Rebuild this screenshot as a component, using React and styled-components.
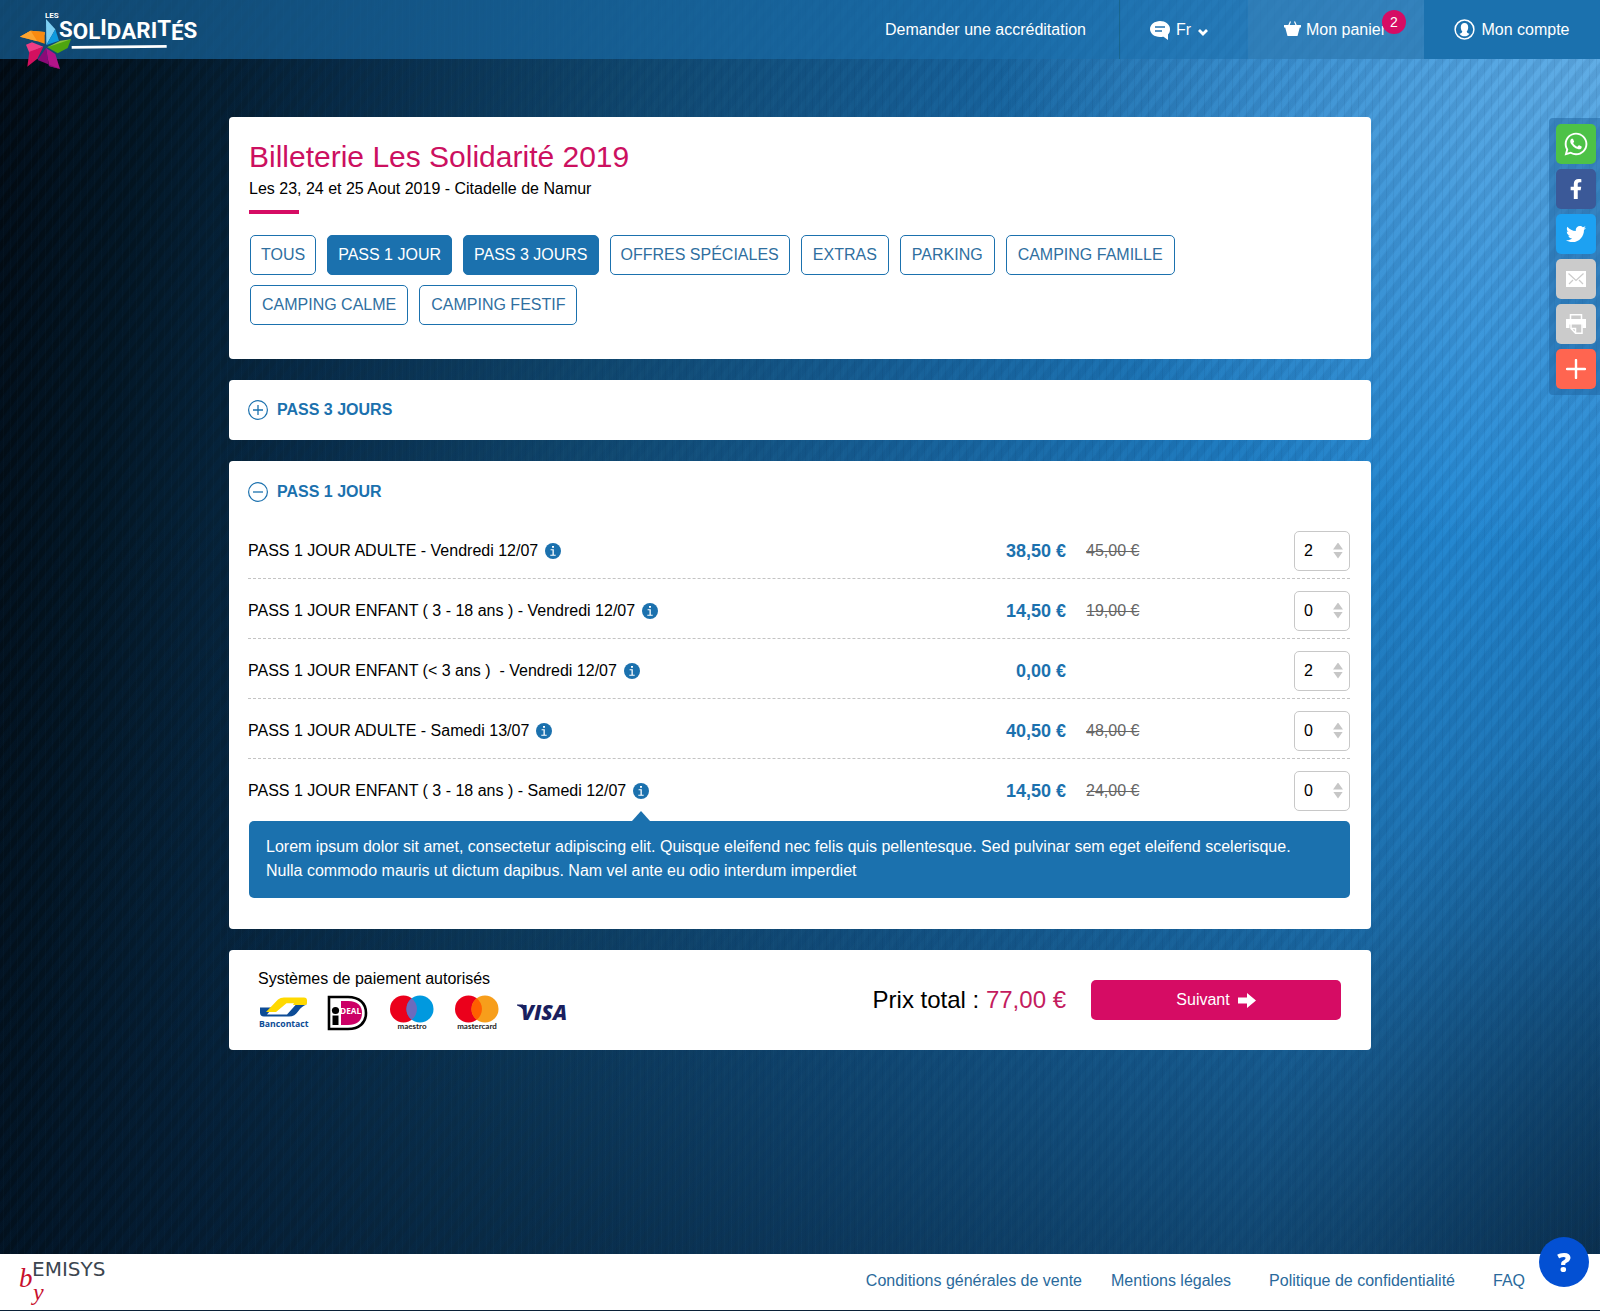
import React, { useState } from 'react';
import styled, { createGlobalStyle, css } from 'styled-components';
import { FaWhatsapp, FaFacebookF, FaTwitter } from 'react-icons/fa';

const blue = '#1b71ae';
const pink = '#d60c64';

const GlobalStyle = createGlobalStyle`
  *, *::before, *::after { box-sizing: border-box; }
  body { margin: 0; font: 16px/24px "Liberation Sans", Arial, sans-serif; color: #000; }
  a { text-decoration: none; }
  button, input, select { font: inherit; color: inherit; }
  h1, h2, p, ul { margin: 0; padding: 0; }
  ul { list-style: none; }
`;

const Page = styled.div`
  min-height: 100vh;
  display: flex;
  flex-direction: column;
  background:
    repeating-linear-gradient(128deg, rgba(0, 50, 100, 0.11) 0 5px, transparent 7px 11px, rgba(0, 50, 100, 0.11) 13px),
    repeating-linear-gradient(90deg, rgba(0, 20, 50, 0.06) 0 1px, transparent 1px 3px, rgba(80, 160, 220, 0.03) 3px 4px, transparent 4px 7px),
    radial-gradient(ellipse 600px 500px at 100% 4%, rgba(125, 190, 238, 0.7), rgba(110, 180, 235, 0.4) 50%, transparent),
    linear-gradient(180deg, transparent 38%, rgba(2, 14, 28, 0.22) 70%, rgba(2, 14, 28, 0.52) 96%),
    radial-gradient(ellipse 420px 600px at 104% 100%, rgba(2, 14, 28, 0.5), transparent),
    linear-gradient(97deg, #020910 0, #031420 9%, #082943 20%, #10466c 36%, #176097 54%, #1f7bbf 72%, #258ad4 86%, #2182ca 100%);
`;

const Header = styled.header`
  height: 59px;
  display: flex;
  justify-content: space-between;
  background: rgba(27, 112, 174, 0.6);
  color: #fff;
`;

const LogoLink = styled.a`
  height: 59px;
  svg { display: block; }
`;

const HeaderNav = styled.nav`
  display: flex;
`;

const navCell = css`
  display: flex;
  align-items: center;
  color: #fff;
`;

const NavLink = styled.a`
  ${navCell}
  padding-right: 33px;
  border-right: 1px solid rgba(20, 90, 110, 0.5);
`;

const Language = styled.label`
  ${navCell}
  width: 128px;
  padding-left: 30px;
  gap: 6px;
`;

const LanguageSelect = styled.select`
  appearance: none;
  border: 0;
  padding: 0;
  width: 16px;
  background: transparent;
  option { color: #000; }
`;

const NavTab = styled.a`
  ${navCell}
  position: relative;
  width: 176px;
  justify-content: center;
  gap: ${(p) => (p.$solid ? 6 : 5)}px;
  padding-right: ${(p) => (p.$solid ? 0 : 2)}px;
  background: ${(p) => (p.$solid ? blue : 'rgba(60, 130, 185, 0.45)')};
`;

const CartBadge = styled.span`
  position: absolute;
  top: 10px;
  right: 18px;
  width: 24px;
  height: 24px;
  border-radius: 50%;
  background: ${pink};
  font-size: 14px;
  text-align: center;
`;

const Main = styled.main`
  flex: 1;
  width: 100%;
  max-width: 1142px;
  margin: 0 auto;
  padding: 58px 0;
  display: flex;
  flex-direction: column;
  gap: 21px;
`;

const Card = styled.section`
  background: #fff;
  border-radius: 4px;
  padding: ${(p) => p.$pad || '0 20px'};
`;

const Title = styled.h1`
  font-size: 30px;
  line-height: 36px;
  font-weight: 400;
  color: #cc1060;
`;

const Subtitle = styled.p`
  margin-top: 2px;
  padding-bottom: 9px;
`;

const Accent = styled.div`
  width: 50px;
  height: 4px;
  background: ${pink};
`;

const Chips = styled.div`
  display: flex;
  flex-wrap: wrap;
  gap: 10px 11px;
  max-width: 1000px;
  margin-top: 21px;
  padding-left: 1px;
`;

const Chip = styled.button`
  height: 40px;
  padding: 0 ${(p) => (p.$wide ? 11 : 10)}px;
  border: 1px solid ${blue};
  border-radius: 5px;
  cursor: pointer;
  background: ${(p) => (p.$active ? blue : '#fff')};
  color: ${(p) => (p.$active ? '#fff' : '#2f6f9f')};
`;

const GroupTitle = styled.h2`
  font-size: 16px;
  line-height: 20px;
`;

const GroupToggle = styled.button`
  display: flex;
  align-items: center;
  gap: 9px;
  width: 100%;
  height: ${(p) => (p.$open ? 58 : 60)}px;
  padding: ${(p) => (p.$open ? '4px 0 0' : '0')};
  border: 0;
  background: none;
  font-weight: 700;
  color: ${blue};
  cursor: pointer;
`;

const Ticket = styled.li`
  display: grid;
  grid-template-columns: minmax(0, 1fr) 120px 228px 56px;
  align-items: center;
  height: 60px;
  padding-top: 4px;
  border-bottom: 1px ${(p) => (p.$last ? 'solid transparent' : 'dashed #c4c4c4')};
`;

const TicketName = styled.div`
  display: flex;
  align-items: center;
  gap: 7px;
  white-space: pre;
`;

const InfoWrap = styled.span`
  position: relative;
  display: flex;
`;

const InfoButton = styled.button`
  display: flex;
  padding: 0;
  border: 0;
  background: none;
  cursor: pointer;
`;

const Pointer = styled.span`
  position: absolute;
  left: -1px;
  top: 28px;
  border: 9px solid transparent;
  border-top: 0;
  border-bottom: 10px solid ${blue};
`;

const Price = styled.strong`
  font-size: 18px;
  text-align: right;
  color: ${blue};
`;

const OldPrice = styled.s`
  padding-left: 20px;
  color: #666;
`;

const Quantity = styled.div`
  display: flex;
  align-items: center;
  height: 40px;
  padding: 0 6px 0 9px;
  border: 1px solid #c8c8c8;
  border-radius: 5px;
`;

const QuantityInput = styled.input`
  flex: 1;
  min-width: 0;
  padding: 0;
  border: 0;
  outline: 0;
  background: none;
  appearance: textfield;
  &::-webkit-inner-spin-button { appearance: none; margin: 0; }
`;

const Steps = styled.div`
  display: flex;
  flex-direction: column;
  gap: 2px;
`;

const Step = styled.button`
  width: 10px;
  height: 7px;
  padding: 0;
  border: 0;
  background: #c6c6c6;
  clip-path: ${(p) => (p.$up ? 'polygon(50% 0, 100% 100%, 0 100%)' : 'polygon(0 0, 100% 0, 50% 100%)')};
  cursor: pointer;
`;

const Tip = styled.p`
  margin: 2px 0 0 1px;
  padding: 14px 16px 15px 17px;
  border-radius: 5px;
  background: ${blue};
  color: #fff;
`;

const Checkout = styled(Card)`
  height: 100px;
  display: flex;
  align-items: center;
`;

const Payments = styled.div`
  flex: 1;
  display: flex;
  flex-direction: column;
  gap: 4px;
  padding-bottom: 3px;
`;

const PaymentLogos = styled.div`
  display: flex;
  height: 36px;
  padding-left: 1px;
  svg { display: block; }
`;

const Total = styled.p`
  font-size: 24px;
  margin-right: 25px;
  span { color: #c41c5e; }
`;

const NextButton = styled.button`
  display: flex;
  align-items: center;
  justify-content: center;
  gap: 8px;
  width: 250px;
  height: 40px;
  border: 0;
  border-radius: 5px;
  background: ${pink};
  color: #fff;
  cursor: pointer;
`;

const ShareBar = styled.aside`
  position: fixed;
  top: 118px;
  right: 0;
  display: flex;
  flex-direction: column;
  gap: 5px;
  padding: 6px 4px 6px 7px;
  border-radius: 4px 0 0 4px;
  background: rgba(30, 100, 160, 0.5);
`;

const ShareButton = styled.button`
  display: grid;
  place-items: center;
  width: 40px;
  height: 40px;
  padding: 0;
  border: 0;
  border-radius: 5px;
  background: ${(p) => p.$color};
  color: #fff;
  cursor: pointer;
`;

const Footer = styled.footer`
  display: flex;
  align-items: center;
  justify-content: space-between;
  height: 57px;
  padding: 0 75px 2px 16px;
  background: #fff;
  border-bottom: 1px solid #0c2238;
`;

const FooterBrand = styled.a`
  svg { display: block; }
`;

const FooterLinks = styled.nav`
  display: flex;
  gap: ${(p) => p.$gap}px;
  a { color: #2a6a9c; }
`;

const HelpButton = styled.button`
  position: fixed;
  right: 11px;
  bottom: 24px;
  width: 50px;
  height: 50px;
  padding: 0;
  border: 0;
  border-radius: 50%;
  background: #0350d3;
  color: #fff;
  font: 800 27px/48px "Open Sans", sans-serif;
  cursor: pointer;
`;

const Logo = () => (
  <svg width="220" height="90" viewBox="0 0 660 270" role="img" aria-label="Les Solidarités">
    <path d="M138 57 166 88 139 135z" fill="#7fd0f3" />
    <path d="M166 88 177 122 139 135z" fill="#0f9ade" />
    <path d="M60 110 92 92 134 96 134 104z" fill="#fbb03b" />
    <path d="M60 110 92 92 134 96 134 131 112 124z" fill="#f98a10" />
    <path d="M60 110 92 92 112 124z" fill="#fba430" />
    <path d="M142 142 181 122 213 118 190 140z" fill="#8cc63f" />
    <path d="M142 142 213 118 203 144 173 160z" fill="#4ea50f" />
    <path d="M138 144 166 162 180 207 147 198z" fill="#b3148a" />
    <path d="M138 144 147 198 180 207 113 180z" fill="#8b0a78" />
    <path d="M130 140 96 127 78 134 88 158z" fill="#ee3d86" />
    <path d="M130 140 88 155 82 200 112 176z" fill="#d3105f" />
    <g fill="#fff" fontFamily="Roboto, sans-serif" fontWeight="700">
      <text x="135" y="55" fontSize="24">LES</text>
      <text x="177" y="112" fontSize="67">
        S<tspan dy="6">O</tspan>L<tspan dy="-12">I</tspan><tspan dy="12">D</tspan>A<tspan dy="-3">R</tspan>I<tspan dy="-6">T</tspan><tspan dy="12">É</tspan><tspan dy="-8">S</tspan>
      </text>
    </g>
    <path d="M215 142 500 139" stroke="#fff" strokeWidth="8" />
  </svg>
);

const ChatIcon = () => (
  <svg width="20" height="20" viewBox="0 0 20 20" fill="none">
    <path d="M10 1c5.200 0 10 3.500 10 8 0 3-.8 4.200-2 5.500V20l-4.500-3.200C12.300 17 11.500 17 10 17 4.300 17 0 13.400 0 9s4.800-8 10-8z" fill="#fff" />
    <path d="M5 7h10M5 11h7" stroke="#2272ae" strokeWidth="1.500" />
  </svg>
);

const ChevronIcon = () => (
  <svg width="10" height="14" viewBox="0 0 10 14" fill="none">
    <path d="M1 7l4 4 4-4" stroke="#fff" strokeWidth="2.800" />
  </svg>
);

const BasketIcon = () => (
  <svg width="17" height="19" viewBox="0 0 17 19" fill="none">
    <path d="M4.500 6 6.500 1.500M12.500 6l-2-4.500" stroke="#fff" strokeWidth="1.200" />
    <path d="M0 5h17v2.500h-1.200L13.500 16h-10L1.200 7.500H0z" fill="#fff" />
  </svg>
);

const UserIcon = () => (
  <svg width="21" height="21" viewBox="0 0 21 21" fill="none">
    <circle cx="10.500" cy="10.500" r="9.400" stroke="#fff" strokeWidth="1.500" />
    <path d="M10.500 4c2.500 0 3.700 1.800 3.700 4.200 0 1.800-.6 3.300-1.500 4.200.3 1.500 1.500 1.700 2.800 2.300-1.400 1.800-3 2.600-5 2.600s-3.600-.8-5-2.600c1.300-.6 2.500-.8 2.800-2.300-.9-.9-1.500-2.400-1.500-4.200C6.800 5.800 8 4 10.500 4z" fill="#fff" />
  </svg>
);

const ToggleIcon = ({ open }) => (
  <svg width="20" height="20" viewBox="0 0 20 20" fill="none" stroke={blue}>
    <circle cx="10" cy="10" r="9.400" strokeWidth="1.200" />
    <path d={open ? 'M5 10h10' : 'M5 10h10M10 5v10'} strokeWidth="1.300" />
  </svg>
);

const InfoIcon = () => (
  <svg width="16" height="16" viewBox="0 0 16 16">
    <circle cx="8" cy="8" r="8" fill={blue} />
    <path d="M7 3h2v1.700H7zM5.600 6.200h3.200v5.500h1.900v1H5.300v-1h2.200V7.200H5.600z" fill="#fff" />
  </svg>
);

const MailIcon = () => (
  <svg width="20" height="16" viewBox="0 0 20 16">
    <path d="M0 0h20v16H0z" fill="#fff" />
    <path d="M2.500 2.500 10 9.500l7.500-7M3 13l4-4M17 13l-4-4" fill="none" stroke="#cbcbcb" strokeWidth="1.200" />
  </svg>
);

const PrintIcon = () => (
  <svg width="20" height="20" viewBox="0 0 20 20" fill="none">
    <path d="M4.500 5V.8h11V5" stroke="#fff" strokeWidth="1.500" />
    <path d="M0 5h20v9h-3.500v-3.500h-13V14H0z" fill="#fff" />
    <path d="M5 9v5.500l4.500 4.700H16V9M5 14.500h4.500v4.700" stroke="#fff" strokeWidth="1.500" />
  </svg>
);

const PlusIcon = () => (
  <svg width="20" height="20" viewBox="0 0 20 20">
    <path d="M10 1v18M1 10h18" stroke="#fff" strokeWidth="2.400" strokeLinecap="round" />
  </svg>
);

const ArrowIcon = () => (
  <svg width="18" height="15" viewBox="0 0 18 15">
    <path d="M0 4.500h9V0l9 7.500L9 15v-4.500H0z" fill="#fff" />
  </svg>
);

const PaymentMarks = () => (
  <svg width="310" height="36" viewBox="0 0 310 36" role="img" aria-label="Bancontact, iDEAL, Maestro, Mastercard, Visa">
    <path d="M1 12.500h13L8 19.500h20l9-10h11c-4 1-6 3-9 7-2 3-5 5-9 5H5q-4 0-4-4z" fill="#0d4c96" />
    <path d="M7 17 19 4.500Q21.500 2.500 25 2.500h20q3 0 3 3v2.500q0 2-3 2H34l1-1.800h-7.500L17 17z" fill="#ffd900" />
    <text x="0" y="32" fontFamily="Open Sans, sans-serif" fontWeight="700" fontSize="8.700" fill="#0d4c96">Bancontact</text>

    <path d="M70 2h19c11 0 18 6 18 16s-7 16-18 16H70z" fill="#fff" stroke="#000" strokeWidth="2.600" />
    <path d="M82 6h7c10 0 14 5 14 12s-4 12-14 12h-7z" fill="#cc0066" />
    <circle cx="76.500" cy="15.500" r="3.600" fill="#000" />
    <path d="M73.500 20.500h6V30h-6z" fill="#000" />
    <text x="81" y="19" fontFamily="Open Sans, sans-serif" fontWeight="700" fontSize="8.300" fill="#fff">DEAL</text>

    <circle cx="144.500" cy="14" r="13.500" fill="#eb001b" />
    <circle cx="161" cy="14" r="13.500" fill="#0099df" />
    <path d="M152.700 3.300a13.500 13.500 0 0 1 0 21.400 13.500 13.500 0 0 1 0-21.400z" fill="#6c6bbd" />
    <text x="153" y="34" textAnchor="middle" fontFamily="Lato, sans-serif" fontWeight="700" fontSize="8" fill="#222">maestro</text>

    <circle cx="209.500" cy="14" r="13.500" fill="#eb001b" />
    <circle cx="226" cy="14" r="13.500" fill="#f79e1b" />
    <path d="M217.700 3.300a13.500 13.500 0 0 1 0 21.400 13.500 13.500 0 0 1 0-21.400z" fill="#ff5f00" />
    <text x="218" y="34" textAnchor="middle" fontFamily="Lato, sans-serif" fontWeight="700" fontSize="8" fill="#222">mastercard</text>

    <path d="M258 9.500h6l3 5-2 1q-3-4-7-5z" fill="#1a1f5e" />
    <text x="262" y="25" fontFamily="Open Sans, sans-serif" fontStyle="italic" fontWeight="800" fontSize="21" fill="#1a1f5e">VISA</text>
  </svg>
);

const EmisysLogo = () => (
  <svg width="110" height="54" viewBox="0 0 110 54" role="img" aria-label="by Emisys">
    <g fontFamily="Liberation Serif, serif" fontStyle="italic" fill="#c8102e">
      <text x="3" y="33" fontSize="27">b</text>
      <text x="17" y="46" fontSize="24">y</text>
    </g>
    <text x="16" y="22" fontFamily="DejaVu Sans, sans-serif" fontSize="20" fill="#3c4650">EMISYS</text>
  </svg>
);

const categories = [
  { name: 'TOUS' },
  { name: 'PASS 1 JOUR' },
  { name: 'PASS 3 JOURS' },
  { name: 'OFFRES SPÉCIALES' },
  { name: 'EXTRAS', wide: true },
  { name: 'PARKING', wide: true },
  { name: 'CAMPING FAMILLE', wide: true },
  { name: 'CAMPING CALME', wide: true },
  { name: 'CAMPING FESTIF', wide: true },
];

const tickets = [
  { name: 'PASS 1 JOUR ADULTE - Vendredi 12/07', price: '38,50 €', old: '45,00 €', qty: 2 },
  { name: 'PASS 1 JOUR ENFANT ( 3 - 18 ans ) - Vendredi 12/07', price: '14,50 €', old: '19,00 €', qty: 0 },
  { name: 'PASS 1 JOUR ENFANT (< 3 ans )  - Vendredi 12/07', price: '0,00 €', qty: 2 },
  { name: 'PASS 1 JOUR ADULTE - Samedi 13/07', price: '40,50 €', old: '48,00 €', qty: 0 },
  { name: 'PASS 1 JOUR ENFANT ( 3 - 18 ans ) - Samedi 12/07', price: '14,50 €', old: '24,00 €', qty: 0, tip: true },
];

const shares = [
  { label: 'WhatsApp', color: '#4dc247', icon: <FaWhatsapp size={26} /> },
  { label: 'Facebook', color: '#3b5998', icon: <FaFacebookF size={20} /> },
  { label: 'Twitter', color: '#1da1f2', icon: <FaTwitter size={20} /> },
  { label: 'E-mail', color: '#cbcbcb', icon: <MailIcon /> },
  { label: 'Imprimer', color: '#cbcbcb', icon: <PrintIcon /> },
  { label: 'Plus', color: '#ff6550', icon: <PlusIcon /> },
];

function TicketRow({ ticket, last }) {
  const [qty, setQty] = useState(ticket.qty);
  return (
    <Ticket $last={last}>
      <TicketName>
        {ticket.name}
        <InfoWrap>
          <InfoButton aria-label="Informations"><InfoIcon /></InfoButton>
          {ticket.tip && <Pointer />}
        </InfoWrap>
      </TicketName>
      <Price>{ticket.price}</Price>
      {ticket.old ? <OldPrice>{ticket.old}</OldPrice> : <span />}
      <Quantity>
        <QuantityInput
          type="number"
          min="0"
          aria-label={`Quantité ${ticket.name}`}
          value={qty}
          onChange={(e) => setQty(Math.max(0, Number(e.target.value)))}
        />
        <Steps>
          <Step $up aria-label="Ajouter" onClick={() => setQty(qty + 1)} />
          <Step aria-label="Retirer" onClick={() => setQty(Math.max(0, qty - 1))} />
        </Steps>
      </Quantity>
    </Ticket>
  );
}

export default function App() {
  const [active, setActive] = useState(['PASS 1 JOUR', 'PASS 3 JOURS']);
  const toggle = (name) =>
    setActive(active.includes(name) ? active.filter((n) => n !== name) : [...active, name]);

  return (
    <Page>
      <GlobalStyle />
      <Header>
        <LogoLink href="#"><Logo /></LogoLink>
        <HeaderNav>
          <NavLink href="#">Demander une accréditation</NavLink>
          <Language>
            <ChatIcon />
            <LanguageSelect aria-label="Langue" defaultValue="Fr">
              <option>Fr</option>
              <option>En</option>
            </LanguageSelect>
            <ChevronIcon />
          </Language>
          <NavTab href="#">
            <BasketIcon />
            Mon panier
            <CartBadge>2</CartBadge>
          </NavTab>
          <NavTab href="#" $solid>
            <UserIcon />
            Mon compte
          </NavTab>
        </HeaderNav>
      </Header>

      <Main>
        <Card $pad="22px 20px 34px">
          <Title>Billeterie Les Solidarité 2019</Title>
          <Subtitle>Les 23, 24 et 25 Aout 2019 - Citadelle de Namur</Subtitle>
          <Accent />
          <Chips>
            {categories.map(({ name, wide }) => (
              <Chip key={name} $wide={wide} $active={active.includes(name)} aria-pressed={active.includes(name)} onClick={() => toggle(name)}>
                {name}
              </Chip>
            ))}
          </Chips>
        </Card>

        <Card $pad="0 20px 0 19px">
          <GroupTitle>
            <GroupToggle aria-expanded="false"><ToggleIcon />PASS 3 JOURS</GroupToggle>
          </GroupTitle>
        </Card>

        <Card $pad="0 21px 31px 19px">
          <GroupTitle>
            <GroupToggle $open aria-expanded="true"><ToggleIcon open />PASS 1 JOUR</GroupToggle>
          </GroupTitle>
          <ul>
            {tickets.map((t, i) => (
              <TicketRow key={t.name} ticket={t} last={i === tickets.length - 1} />
            ))}
          </ul>
          <Tip>
            Lorem ipsum dolor sit amet, consectetur adipiscing elit. Quisque eleifend nec felis quis pellentesque. Sed pulvinar sem eget eleifend scelerisque.
            <br />
            Nulla commodo mauris ut dictum dapibus. Nam vel ante eu odio interdum imperdiet
          </Tip>
        </Card>

        <Checkout $pad="0 30px 0 29px">
          <Payments>
            <p>Systèmes de paiement autorisés</p>
            <PaymentLogos><PaymentMarks /></PaymentLogos>
          </Payments>
          <Total>Prix total : <span>77,00 €</span></Total>
          <NextButton>Suivant <ArrowIcon /></NextButton>
        </Checkout>
      </Main>

      <ShareBar aria-label="Partager">
        {shares.map((s) => (
          <ShareButton key={s.label} $color={s.color} aria-label={s.label}>{s.icon}</ShareButton>
        ))}
      </ShareBar>

      <Footer>
        <FooterBrand href="#"><EmisysLogo /></FooterBrand>
        <FooterLinks $gap={38}>
          <FooterLinks as="div" $gap={29}>
            <a href="#">Conditions générales de vente</a>
            <a href="#">Mentions légales</a>
          </FooterLinks>
          <a href="#">Politique de confidentialité</a>
          <a href="#">FAQ</a>
        </FooterLinks>
      </Footer>
      <HelpButton aria-label="Aide">?</HelpButton>
    </Page>
  );
}
